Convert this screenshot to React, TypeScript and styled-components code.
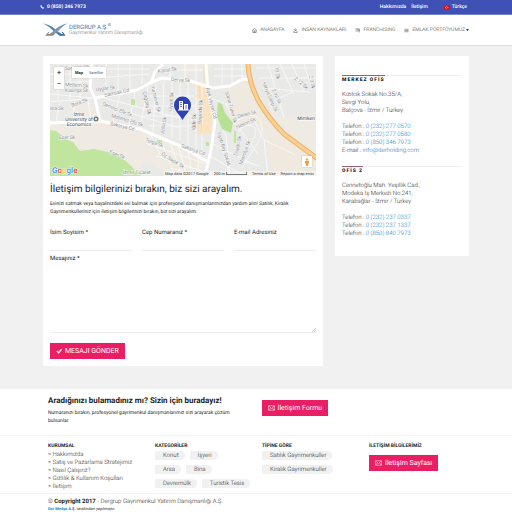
import React from "react";
import styled, { createGlobalStyle } from "styled-components";

const GlobalStyle = createGlobalStyle`
  * { box-sizing: border-box; }
  body {
    margin: 0;
    background: #f1f1f1;
    color: #1c1c1c;
    font-family: Roboto, "Liberation Sans", sans-serif;
    font-size: 6px;
    font-weight: 300;
    line-height: 8px;
    text-rendering: geometricPrecision;
  }
  a { color: inherit; text-decoration: none; }
  h1, h2, h3, p, ul { margin: 0; padding: 0; }
  ul { list-style: none; }
  button, input, textarea { font: inherit; color: inherit; }
`;

const Container = styled.div`
  width: calc(100% - 86px);
  margin: 0 auto;
`;

/* ---------- header ---------- */

const TopBar = styled.div`
  background: #3f51b5;
  color: #fff;
  border-bottom: 1px solid #7986cb;
`;

const TopInner = styled(Container)`
  display: flex;
  align-items: center;
  height: 14px;
  padding-right: 2px;
  font-size: 5px;
  font-weight: 500;
`;

const Phone = styled.a`
  display: flex;
  align-items: center;
  gap: 3px;
  margin-right: auto;
  margin-left: -3px;
  font-weight: 700;
`;

const TopLink = styled.a`
  margin-left: 5px;
`;

const Language = styled.a`
  display: flex;
  align-items: center;
  gap: 2px;
  margin-left: 16px;
`;

const Header = styled.header`
  background: #fff;
  border-bottom: 1px solid #dcdcdc;
`;

const HeaderInner = styled(Container)`
  display: flex;
  align-items: center;
  justify-content: space-between;
  height: 30px;
`;

const Logo = styled.a`
  display: flex;
  align-items: center;
  gap: 1px;
`;

const LogoWords = styled.span`
  display: flex;
  flex-direction: column;
`;

const LogoName = styled.span`
  color: #3f78b3;
  font-size: 6px;
  font-weight: 400;
  line-height: 7px;
  sup { font-size: 4px; line-height: 0; }
`;

const LogoTag = styled.span`
  color: #666;
  font-size: 5px;
  line-height: 5px;
`;

const Nav = styled.nav`
  display: flex;
  gap: 9px;
`;

const NavItem = styled.a`
  display: flex;
  align-items: center;
  gap: 3px;
  color: #333;
  font-size: 5px;
  white-space: nowrap;
`;

const NavLabel = styled.span`
  display: flex;
  align-items: center;
  gap: 1px;
`;

/* ---------- main ---------- */

const Main = styled(Container).attrs({ as: "main" })`
  display: grid;
  grid-template-columns: 280fr 134fr;
  gap: 12px;
  align-items: start;
  padding: 10px 0 23px;
`;

const Card = styled.section`
  background: #fff;
  padding: 8px 7px 7px;
`;

const MapBox = styled.div`
  position: relative;
  height: 112px;
  overflow: hidden;
  svg.map { display: block; width: 100%; height: 100%; }
`;

const ZoomControl = styled.div`
  position: absolute;
  left: 4px;
  top: 3px;
  display: flex;
  flex-direction: column;
  background: #fff;
  box-shadow: 0 0 1px rgba(0, 0, 0, 0.3);
`;

const MapButton = styled.button<{ $wide?: boolean; $on?: boolean }>`
  height: 11px;
  min-width: 10px;
  padding: 0 ${(p) => (p.$wide ? 3 : 0)}px;
  border: 0;
  background: #fff;
  color: ${(p) => (p.$wide && !p.$on ? "#555" : "#222")};
  font-size: ${(p) => (p.$wide ? 4 : 8)}px;
  font-weight: ${(p) => (p.$on ? 700 : 400)};
`;

const TypeControl = styled.div`
  position: absolute;
  left: 22px;
  top: 3px;
  display: flex;
  background: #fff;
  box-shadow: 0 0 1px rgba(0, 0, 0, 0.3);
`;

const Pegman = styled.button`
  position: absolute;
  right: 4px;
  bottom: 9px;
  width: 10px;
  height: 11px;
  padding: 0;
  border: 0;
  background: #fff;
  box-shadow: 0 0 1px rgba(0, 0, 0, 0.3);
  svg { display: block; margin: 0 auto; }
`;

const MapCredits = styled.div`
  position: absolute;
  right: 0;
  bottom: 0;
  display: flex;
  gap: 5px;
  padding: 0 2px 0 1px;
  background: rgba(245, 245, 245, 0.75);
  color: #333;
  font-size: 4px;
  font-weight: 400;
  line-height: 5px;
`;

const ScaleMark = styled.span`
  display: flex;
  align-items: center;
  gap: 1px;
  &::after {
    content: "";
    width: 19px;
    height: 2px;
    border: 1px solid #777;
    border-top: 0;
  }
`;

const Title = styled.h1`
  margin-top: 8px;
  color: #222;
  font-size: 10px;
  font-weight: 400;
  line-height: 12px;
`;

const Lead = styled.p`
  margin-top: 4px;
  font-size: 5px;
  font-weight: 400;
`;

const Form = styled.form`
  display: grid;
  grid-template-columns: repeat(3, 1fr);
  column-gap: 10px;
  margin-top: 13px;
`;

const Field = styled.label<{ $full?: boolean }>`
  display: flex;
  flex-direction: column;
  grid-column: ${(p) => (p.$full ? "1 / -1" : "auto")};
  margin-top: ${(p) => (p.$full ? 4 : 0)}px;
  color: #222;
  font-weight: 400;
`;

const Input = styled.input`
  width: 100%;
  height: 14px;
  padding: 0;
  border: 0;
  border-bottom: 1px solid #ececec;
  outline: 0;
  background: none;
`;

const TextArea = styled.textarea`
  width: 100%;
  height: 70px;
  padding: 0;
  border: 0;
  border-bottom: 1px solid #ececec;
  outline: 0;
  background: none;
  resize: none;
`;

const MessageBox = styled.span`
  position: relative;
  display: flex;
  svg { position: absolute; right: 0; bottom: 1px; }
`;

const pink = `
  display: inline-flex;
  align-items: center;
  justify-self: start;
  height: 16px;
  padding: 0 6px;
  gap: 3px;
  border: 0;
  background: #e91e63;
  color: #fff;
  font-size: 7px;
  font-weight: 400;
  white-space: nowrap;
`;

const SubmitButton = styled.button`
  ${pink}
  margin-top: 10px;
`;

const LinkButton = styled.a`
  ${pink}
`;

const OfficeCard = styled(Card)`
  padding-top: 19px;
  padding-bottom: 18px;
`;

const Office = styled.section`
  border-top: 1px solid #eee;
  margin-bottom: 11px;
  &:last-child { margin-bottom: 0; }
`;

const OfficeTitle = styled.h2`
  display: block;
  width: fit-content;
  margin-top: -1px;
  margin-bottom: -1px;
  border-top: 1px solid #a0607c;
  color: #222;
  font-size: 5px;
  font-weight: 900;
  letter-spacing: 1px;
  line-height: 8px;
`;

const Lines = styled.p`
  margin-top: 8px;
  a { color: #0b76bd; }
`;

/* ---------- footer ---------- */

const Footer = styled.footer`
  background: #fff;
`;

const Band = styled.div`
  border-bottom: 1px solid #f4f4f4;
`;

const FooterInner = styled(Container)`
  padding-left: 5px;
`;

const CallOut = styled(FooterInner)`
  display: grid;
  grid-template-columns: 1fr 1fr;
  align-items: start;
  padding-top: 7px;
  padding-bottom: 10px;
  ${LinkButton} { margin-top: 4px; margin-left: 3px; }
`;

const CallTitle = styled.h2`
  color: #222;
  font-size: 8px;
  font-weight: 700;
  line-height: 10px;
`;

const CallText = styled.p`
  margin-top: 3px;
  padding-right: 8px;
  font-size: 5px;
  font-weight: 400;
`;

const Columns = styled(FooterInner)`
  display: grid;
  grid-template-columns: 107fr 107fr 107fr 100fr;
  padding-top: 6px;
  padding-bottom: 2px;
`;

const Column = styled.section`
  display: flex;
  flex-direction: column;
  align-items: flex-start;
`;

const ColumnTitle = styled.h3`
  margin-bottom: 1px;
  color: #222;
  font-size: 5px;
  font-weight: 700;
  line-height: 8px;
`;

const LinkList = styled.ul`
  white-space: nowrap;
`;

const TagRows = styled.div`
  display: flex;
  flex-direction: column;
  gap: 5px;
`;

const Tags = styled.ul`
  display: flex;
  flex-wrap: wrap;
  gap: 5px;
`;

const Tag = styled.a`
  display: block;
  height: 9px;
  padding: 0 6px 0 8px;
  border-radius: 1px 5px 5px 1px;
  background: #f1f1f1;
  line-height: 9px;
  white-space: nowrap;
`;

const ContactButton = styled(LinkButton)`
  margin-top: 4px;
`;

const Copyright = styled(FooterInner)`
  padding-top: 4px;
  b { color: #222; font-weight: 700; }
`;

const Credit = styled.p`
  font-size: 4px;
  font-weight: 400;
  line-height: 6px;
  a { color: #1d84c6; font-weight: 700; }
`;

/* ---------- drawings ---------- */

const PhoneIcon = () => (
  <svg width="4" height="4" viewBox="0 0 10 10" aria-hidden="true">
    <path d="M1 1 3 0l2 3-1 1 2 2 1-1 3 2-1 2C6 11 0 4 1 1Z" fill="#fff" />
  </svg>
);

const Flag = () => (
  <svg width="6" height="5" viewBox="0 0 12 10" aria-hidden="true">
    <rect y="1" width="12" height="8" fill="#e30a17" />
    <circle cx="5" cy="5" r="2.2" fill="#fff" />
    <circle cx="5.7" cy="5" r="1.7" fill="#e30a17" />
    <circle cx="8" cy="5" r=".8" fill="#fff" />
  </svg>
);

const LogoMark = () => (
  <svg width="25" height="14" viewBox="0 0 75 42" aria-hidden="true">
    <path d="M0 1C20 6 32 13 41 23L62 37H50L34 27C22 14 12 8 0 1Z" fill="#4f83b9" />
    <path d="M74 1C55 5 42 13 33 23L16 36H27l17-10C54 14 62 8 74 1Z" fill="#7e97ad" />
    <path d="m16 27-9 11h22l10-8-12 3H15l5-7Z" fill="#8a8580" />
    <path d="m60 27 8 11H50l-10-8 13 3h7l-4-7Z" fill="#3672b0" />
  </svg>
);

const iconPaths: Record<string, React.ReactNode> = {
  home: <path d="M1 5 6 1l5 4M2 5v6h8V5M5 11V7h2v4" />,
  person: <path d="M4 4a2 2 0 1 0 4 0 2 2 0 1 0-4 0M5 6 2 9v2h8V9L7 6" />,
  board: <path d="M1 2h9v5H1M10 2v9M4 4h3" />,
  list: <path d="M1 3h10M1 6h10M1 9h10" />,
};

const NavIcon = ({ name }: { name: string }) => (
  <svg width="5" height="5" viewBox="0 0 12 12" fill="none" stroke="#666" strokeWidth="1.5" aria-hidden="true">
    {iconPaths[name]}
  </svg>
);

const Caret = () => (
  <svg width="3" height="2" viewBox="0 0 6 4" aria-hidden="true">
    <path d="M0 0h6L3 4Z" fill="#333" />
  </svg>
);

const Check = () => (
  <svg width="6" height="6" viewBox="0 0 14 12" aria-hidden="true">
    <path d="m2 6 4 4 7-8" fill="none" stroke="#fff" strokeWidth="3" />
  </svg>
);

const Envelope = () => (
  <svg width="7" height="6" viewBox="0 0 16 12" fill="none" stroke="#fff" strokeWidth="1.2" aria-hidden="true">
    <path d="M1 1h14v10H1ZM1 1l7 6 7-6M1 11l5-5M15 11l-5-5" />
  </svg>
);

const Grip = () => (
  <svg width="4" height="4" viewBox="0 0 8 8" stroke="#999" aria-hidden="true">
    <path d="M0 8 8 0M4 8l4-4" />
  </svg>
);

const streets: [string, number, number, number][] = [
  ["Samsak Sk", 15, 6, -3],
  ["Meltem Sk", 15, 22, 4],
  ["Kasırga Sk", 15, 28, 0],
  ["Uygar Sk", 46, 27, -6],
  ["Bora Sk", 22, 43, -20],
  ["ora Sk", 0, 46, 0],
  ["Samsak Cd", 55, 33, -13],
  ["Demirci Efe Sk", 52, 41, 22],
  ["Mehmet Efe Sk", 61, 53, 17],
  ["Sakarya Cd", 60, 61, 14],
  ["Eser Sk", 9, 75, 0],
  ["Eser Sk", 59, 89, 22],
  ["Kanal Sk", 108, 9, -8],
  ["Derya Sk", 121, 17, 3],
  ["Tolga Sk", 95, 77, 20],
  ["Öz Sadık Sk", 111, 91, 32],
  ["Çağdaş Sk", 93, 28, 78],
  ["Yurtsever Sk", 101, 22, 76],
  ["Uysal Sk", 122, 47, -86],
  ["Atilla Sk", 114, 70, -82],
  ["Sakarya Cd", 131, 83, 20],
  ["İğde Sk", 145, 66, -86],
  ["Bayındır Sk", 151, 60, -86],
  ["Aşık Veysel Cd", 156, 24, 76],
  ["Silme Tuner Sk", 175, 28, 74],
  ["Fatih Bey Sokak", 167, 69, 72],
  ["Nesrin Sk", 187, 65, -24],
  ["Deren Sk", 188, 54, -14],
  ["Duygu Sk", 187, 92, -78],
  ["Manolya Sk", 192, 101, -70],
  ["Yahya Galip Sk", 212, 19, 66],
  ["2.Yıl Sk", 222, 26, 66],
  ["2.12 Sk", 244, 15, 40],
  ["2.3 Sk", 259, 12, 78],
  ["10 Sk", 225, 3, 82],
];

const minorRoads = [
  "M0 10h40M0 20l40-3M0 30l42 4M8 0v38M20 0v36M30 0v34M0 38l45-4M10 38l-4 20M25 36l-2 21M38 36l3 21",
  "M45 5h55M44 14l56-4M56 0v30M68 0v28M80 0v26M92 0v20M50 40l80 24M54 34l76 20M70 30l-8 32M85 28l-6 34M98 22l-8 42",
  "M106 20l-3 48M114 16l-2 54M122 16v58M130 16v60M138 16v66M146 14v72M152 18v74M100 32h54M95 42h66M92 52h70M100 62h62M110 6h48M120 0v14M135 0v15M146 0v14",
  "M100 70l12 24M110 74l10 26M120 78l10 28M128 80l8 30M138 84l4 28M148 88v22M98 80l58 20M106 92l48 16M120 104l30 8",
  "M164 5h34M164 12h32M172 0v22M182 0v20M192 0v15M160 34l16 6 10 20 22 30M162 44l14 28 4 40M168 70l12 42M163 80l40 20M160 92l34 20",
  "M184 60c20-20 36-2 24 18l-16 26M188 68c12-14 22-4 16 6l-12 22M206 4h60M208 14h58M212 24l48 4M218 0l16 54M230 0l14 30M242 0l12 28M254 0l8 26M218 40l24-12",
  "M204 56l10 20 4 36M214 76l30 14M190 96l20 6",
];

const CityMap = () => (
  <svg className="map" viewBox="0 0 266 112" preserveAspectRatio="xMidYMid slice" role="img" aria-label="Harita">
    <rect width="266" height="112" fill="#e9e9e8" />
    <path d="M0 58h50l40 7 40 18 26 14-4 15H118L96 96 86 112H0Z" fill="#efebe2" />
    <path d="M20 40l20-4 8 20H18Z" fill="#efeae4" />
    <path d="M0 66l6 1 8 7 9 4 7 9 14-2 23 5 11 9 9 9 4 4H0Z" fill="#c0e59f" />
    <path d="M176 24l20-8 8 20 16 26 46 32v18h-44l-6-36-12-22-18 6-10-14Z" fill="#efe9df" />
    <path d="M216 32l14 22 36-6v40l-20-12-24-24Z" fill="#efeae2" />
    <path d="M144 18h14l3 20v32h-14l4-28Z" fill="#f9e3c2" />
    <path d="M132 0h30v8h-30Z" fill="#eeebe6" />
    <g fill="none" stroke="#fff" strokeWidth="1" opacity=".7">
      {minorRoads.map((d) => <path key={d} d={d} />)}
    </g>
    <g fill="none" stroke="#fbd9a4" strokeWidth="1">
      <path d="M154 0v18M144 20h14M144 32h15M147 42h15M148 52h14M147 62h15M149 18l3 52" />
    </g>
    <g fill="none" stroke="#fff" strokeWidth="3" strokeLinejoin="round">
      <path d="M0 59l50-2 40 8 40 17 28 16" />
      <path d="M42 0l-2 24 5 10 5 23" />
      <path d="M45 34l42-8 13-7 12-5 28 3 23 7 17-2 13-7 9 1" />
      <path d="M101 19l4-11 8-8" />
      <path d="M156 0l2 28 7 30-4 28-6 26" />
    </g>
    <path d="M168 38l4 2 3 9 8 10-2 10-9-4-5-12Z" fill="#b9e196" />
    <path d="M81 35h4v6h-4ZM107 76h5v4h-5ZM156 78h3v4h-3ZM184 67h2v12h-2Z" fill="#c0e59f" />
    <path d="M198-2c0 14 4 26 10 38 8 14 16 24 26 34l34 25" fill="none" stroke="#eeb163" strokeWidth="5" />
    <path d="M198-2c0 14 4 26 10 38 8 14 16 24 26 34l34 25" fill="none" stroke="#fbd092" strokeWidth="3" />
    <g fontSize="5" fontWeight="300" fill="#666" stroke="#f5f5f5" strokeWidth="1" paintOrder="stroke">
      {streets.map(([name, x, y, angle]) => (
        <text key={`${name}${x}`} transform={`translate(${x} ${y}) rotate(${angle})`}>{name}</text>
      ))}
    </g>
    <g fontSize="5" fontWeight="400" fill="#444" stroke="#fff" strokeWidth="1" paintOrder="stroke">
      <text x="29" y="52" textAnchor="middle">İzmir</text>
      <text x="29" y="57" textAnchor="middle">University of</text>
      <text x="29" y="62" textAnchor="middle">Economics</text>
      <text x="265" y="56" textAnchor="end">Mimken</text>
      <text x="73" y="110" fill="#5b8a50">İzmir Ticaret</text>
    </g>
    <circle cx="46" cy="55" r="2.5" fill="#777" />
    <circle cx="46" cy="55" r="1" fill="#fff" />
    <path d="M132.500 56c-3-6-8.500-9-8.500-15a8.500 8.500 0 0 1 17 0c0 6-5.500 9-8.500 15Z" fill="#2f42b5" />
    <path d="M129 37h4v9h-4ZM134 40h4v6h-4ZM128 45.500h11v1h-11Z" fill="#fff" />
    <path d="M130 38.500h2M130 40.500h2M130 42.500h2M135 42h2M135 44h2" stroke="#2f42b5" strokeWidth=".7" />
    <text x="2" y="109" fontSize="8" fontWeight="500" stroke="#fff" strokeWidth="1" paintOrder="stroke">
      <tspan fill="#4285f4">G</tspan><tspan fill="#ea4335">o</tspan><tspan fill="#fbbc05">o</tspan><tspan fill="#4285f4">g</tspan><tspan fill="#34a853">l</tspan><tspan fill="#ea4335">e</tspan>
    </text>
  </svg>
);

/* ---------- data ---------- */

const navItems = [
  ["home", "ANASAYFA"],
  ["person", "İNSAN KAYNAKLARI"],
  ["board", "FRANCHISING"],
  ["list", "EMLAK PORTFÖYÜMÜZ"],
];

const offices = [
  {
    name: "MERKEZ OFİS",
    address: ["Kızılcık Sokak No.35/A,", "Sevgi Yolu,", "Balçova - İzmir / Turkey"],
    contacts: [
      ["Telefon", "0 (232) 277 0570"],
      ["Telefon", "0 (232) 277 0580"],
      ["Telefon", "0 (850) 346 7973"],
      ["E-mail", "info@derholding.com"],
    ],
  },
  {
    name: "OFİS 2",
    address: ["Cennetoğlu Mah. Yeşillik Cad.,", "Modeka İş Merkezi No:241,", "Karabağlar - İzmir / Turkey"],
    contacts: [
      ["Telefon", "0 (232) 237 0337"],
      ["Telefon", "0 (232) 237 1337"],
      ["Telefon", "0 (850) 840 7973"],
    ],
  },
];

const corporate = ["Hakkımızda", "Satış ve Pazarlama Stratejimiz", "Nasıl Çalışırız?", "Gizlilik & Kullanım Koşulları", "İletişim"];
const categories = [["Konut", "İşyeri"], ["Arsa", "Bina"], ["Devremülk", "Turistik Tesis"]];
const types = [["Satılık Gayrimenkuller"], ["Kiralık Gayrimenkuller"]];

const TagGroup = ({ rows }: { rows: string[][] }) => (
  <TagRows>
    {rows.map((row) => (
      <Tags key={row[0]}>
        {row.map((tag) => <li key={tag}><Tag href="#">{tag}</Tag></li>)}
      </Tags>
    ))}
  </TagRows>
);

export default function App() {
  return (
    <>
      <GlobalStyle />
      <TopBar>
        <TopInner>
          <Phone href="tel:08503467973"><PhoneIcon />0 (850) 346 7973</Phone>
          <TopLink href="#">Hakkımızda</TopLink>
          <TopLink href="#">İletişim</TopLink>
          <Language href="#"><Flag />Türkçe</Language>
        </TopInner>
      </TopBar>
      <Header>
        <HeaderInner>
          <Logo href="#">
            <LogoMark />
            <LogoWords>
              <LogoName>DERGRUP A.Ş.<sup>®</sup></LogoName>
              <LogoTag>Gayrimenkul Yatırım Danışmanlığı</LogoTag>
            </LogoWords>
          </Logo>
          <Nav>
            {navItems.map(([icon, label]) => (
              <NavItem key={label} href="#">
                <NavIcon name={icon} />
                <NavLabel>{label}{icon === "list" && <Caret />}</NavLabel>
              </NavItem>
            ))}
          </Nav>
        </HeaderInner>
      </Header>

      <Main>
        <Card>
          <MapBox>
            <CityMap />
            <ZoomControl>
              <MapButton type="button" aria-label="Zoom in">+</MapButton>
              <MapButton type="button" aria-label="Zoom out">−</MapButton>
            </ZoomControl>
            <TypeControl>
              <MapButton type="button" $wide $on>Map</MapButton>
              <MapButton type="button" $wide>Satellite</MapButton>
            </TypeControl>
            <Pegman type="button" aria-label="Street View">
              <svg width="6" height="8" viewBox="0 0 12 16" aria-hidden="true">
                <circle cx="6" cy="3" r="2.500" fill="#f0b23a" />
                <path d="M2 6h8v5H8v5H4v-5H2Z" fill="#e9a02c" />
              </svg>
            </Pegman>
            <MapCredits>
              <span>Map data ©2017 Google</span>
              <ScaleMark>200 m</ScaleMark>
              <a href="#">Terms of Use</a>
              <a href="#">Report a map error</a>
            </MapCredits>
          </MapBox>
          <Title>İletişim bilgilerinizi bırakın, biz sizi arayalım.</Title>
          <Lead>
            Evinizi satmak veya hayalinizdeki evi bulmak için profesyonel danışmanlarımızdan yardım alın! Satılık, Kiralık
            Gayrimenkulleriniz için iletişim bilgilerinizi bırakın, biz sizi arayalım.
          </Lead>
          <Form>
            <Field>İsim Soyisim *<Input type="text" /></Field>
            <Field>Cep Numaranız *<Input type="tel" /></Field>
            <Field>E-mail Adresiniz<Input type="email" /></Field>
            <Field $full>
              Mesajınız *
              <MessageBox><TextArea /><Grip /></MessageBox>
            </Field>
            <SubmitButton type="button"><Check />MESAJI GÖNDER</SubmitButton>
          </Form>
        </Card>

        <OfficeCard>
          {offices.map((office) => (
            <Office key={office.name}>
              <OfficeTitle>{office.name}</OfficeTitle>
              <Lines>
                {office.address.map((line) => <React.Fragment key={line}>{line}<br /></React.Fragment>)}
              </Lines>
              <Lines>
                {office.contacts.map(([kind, value]) => (
                  <React.Fragment key={value}>{kind} : <a href="#">{value}</a><br /></React.Fragment>
                ))}
              </Lines>
            </Office>
          ))}
        </OfficeCard>
      </Main>

      <Footer>
        <Band>
          <CallOut>
            <div>
              <CallTitle>Aradığınızı bulamadınız mı? Sizin için buradayız!</CallTitle>
              <CallText>
                Numaranızı bırakın, profesyonel gayrimenkul danışmanlarımız sizi arayarak çözüm<br />bulsunlar.
              </CallText>
            </div>
            <LinkButton href="#"><Envelope />İletişim Formu</LinkButton>
          </CallOut>
        </Band>
        <Band>
          <Columns>
            <Column>
              <ColumnTitle>KURUMSAL</ColumnTitle>
              <LinkList>
                {corporate.map((item) => <li key={item}><a href="#">&gt; {item}</a></li>)}
              </LinkList>
            </Column>
            <Column>
              <ColumnTitle>KATEGORİLER</ColumnTitle>
              <TagGroup rows={categories} />
            </Column>
            <Column>
              <ColumnTitle>TİPİNE GÖRE</ColumnTitle>
              <TagGroup rows={types} />
            </Column>
            <Column>
              <ColumnTitle>İLETİŞİM BİLGİLERİMİZ</ColumnTitle>
              <ContactButton href="#"><Envelope />İletişim Sayfası</ContactButton>
            </Column>
          </Columns>
        </Band>
        <Copyright>
          <p>© <b>Copyright 2017</b> - Dergrup Gayrimenkul Yatırım Danışmanlığı A.Ş.</p>
          <Credit><a href="#">Der Medya A.Ş.</a> tarafından yapılmıştır.</Credit>
        </Copyright>
      </Footer>
    </>
  );
}
